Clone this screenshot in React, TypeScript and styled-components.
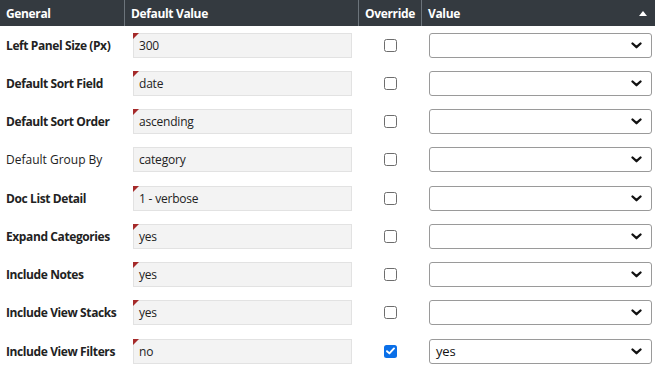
import React from 'react';
import styled, { createGlobalStyle } from 'styled-components';

const GlobalStyle = createGlobalStyle`
  body {
    margin: 0;
    background: #fff;
    font-family: "Open Sans", "Noto Sans", sans-serif;
  }
`;

type Setting = {
  label: string;
  value: string;
  bold: boolean;
  flagged: boolean;
  override: boolean;
  choice: string;
};

const settings: Setting[] = [
  { label: 'Left Panel Size (Px)', value: '300', bold: true, flagged: true, override: false, choice: '' },
  { label: 'Default Sort Field', value: 'date', bold: true, flagged: true, override: false, choice: '' },
  { label: 'Default Sort Order', value: 'ascending', bold: true, flagged: true, override: false, choice: '' },
  { label: 'Default Group By', value: 'category', bold: false, flagged: false, override: false, choice: '' },
  { label: 'Doc List Detail', value: '1 - verbose', bold: true, flagged: true, override: false, choice: '' },
  { label: 'Expand Categories', value: 'yes', bold: true, flagged: true, override: false, choice: '' },
  { label: 'Include Notes', value: 'yes', bold: true, flagged: true, override: false, choice: '' },
  { label: 'Include View Stacks', value: 'yes', bold: true, flagged: true, override: false, choice: '' },
  { label: 'Include View Filters', value: 'no', bold: true, flagged: true, override: true, choice: 'yes' },
];

const Table = styled.div`
  width: 655px;
  display: grid;
  grid-template-columns: 125px 234px 63px 233px;
`;

const HeadCell = styled.div<{ $center?: boolean; $last?: boolean }>`
  height: 26px;
  background: #343a40;
  color: #fff;
  font-size: 12px;
  font-weight: 700;
  letter-spacing: -0.35px;
  display: flex;
  align-items: center;
  justify-content: ${(p) => (p.$center ? 'center' : 'space-between')};
  padding: 0 6px;
  border-right: ${(p) => (p.$last ? 'none' : '1px solid #6c747b')};
  box-sizing: border-box;
`;

const SortArrow = styled.span`
  width: 0;
  height: 0;
  border-left: 4px solid transparent;
  border-right: 4px solid transparent;
  border-bottom: 5px solid #fff;
  margin-right: 2px;
`;

const Cell = styled.div<{ $center?: boolean }>`
  height: 38.25px;
  display: flex;
  align-items: center;
  justify-content: ${(p) => (p.$center ? 'center' : 'flex-start')};
  box-sizing: border-box;
`;

const Label = styled.span<{ $bold: boolean }>`
  padding-left: 6px;
  font-size: 12px;
  font-weight: ${(p) => (p.$bold ? 700 : 400)};
  letter-spacing: ${(p) => (p.$bold ? '-0.4px' : '0')};
  color: #222;
  white-space: nowrap;
`;

const ValueBox = styled.div<{ $flagged: boolean }>`
  position: relative;
  margin-left: 8px;
  width: 219px;
  height: 25px;
  box-sizing: border-box;
  background: #f3f3f3;
  border: 1px solid #e2e2e2;
  padding-left: 5px;
  display: flex;
  align-items: center;
  font-size: 12px;
  letter-spacing: -0.2px;
  color: #222;

  &::before {
    content: '';
    display: ${(p) => (p.$flagged ? 'block' : 'none')};
    position: absolute;
    top: -1px;
    left: -1px;
    width: 0;
    height: 0;
    border-top: 6px solid #a52a2a;
    border-right: 6px solid transparent;
  }
`;

const Box = styled.span<{ $checked: boolean }>`
  width: 13px;
  height: 13px;
  box-sizing: border-box;
  border-radius: 2.5px;
  border: ${(p) => (p.$checked ? 'none' : '1px solid #6d6d6d')};
  background: ${(p) => (p.$checked ? '#0a6fe8' : '#fff')};
  display: flex;
  align-items: center;
  justify-content: center;
`;

const Select = styled.div`
  margin-left: 7px;
  width: 223px;
  height: 25px;
  box-sizing: border-box;
  border: 1px solid #9a9a9a;
  border-radius: 3px;
  background: #fff;
  display: flex;
  align-items: center;
  justify-content: space-between;
  padding: 0 9px 0 6px;
  font-size: 13px;
  letter-spacing: -0.2px;
  color: #111;
`;

const Check = () => (
  <svg width="9" height="8" viewBox="0 0 9 8">
    <path d="M1 4.2 L3.4 6.4 L8 1.4" fill="none" stroke="#fff" strokeWidth="1.9" strokeLinecap="round" strokeLinejoin="round" />
  </svg>
);

const Chevron = () => (
  <svg width="11" height="7" viewBox="0 0 11 7">
    <path d="M1.5 1.5 L5.5 5.2 L9.5 1.5" fill="none" stroke="#111" strokeWidth="2.3" strokeLinecap="round" strokeLinejoin="round" />
  </svg>
);

export default function App() {
  return (
    <>
      <GlobalStyle />
      <Table>
        <HeadCell>General</HeadCell>
        <HeadCell>Default Value</HeadCell>
        <HeadCell $center>Override</HeadCell>
        <HeadCell $last>
          Value
          <SortArrow />
        </HeadCell>
        {settings.map((s) => (
          <React.Fragment key={s.label}>
            <Cell>
              <Label $bold={s.bold}>{s.label}</Label>
            </Cell>
            <Cell>
              <ValueBox $flagged={s.flagged}>{s.value}</ValueBox>
            </Cell>
            <Cell $center>
              <Box $checked={s.override}>{s.override && <Check />}</Box>
            </Cell>
            <Cell>
              <Select>
                <span>{s.choice}</span>
                <Chevron />
              </Select>
            </Cell>
          </React.Fragment>
        ))}
      </Table>
    </>
  );
}
